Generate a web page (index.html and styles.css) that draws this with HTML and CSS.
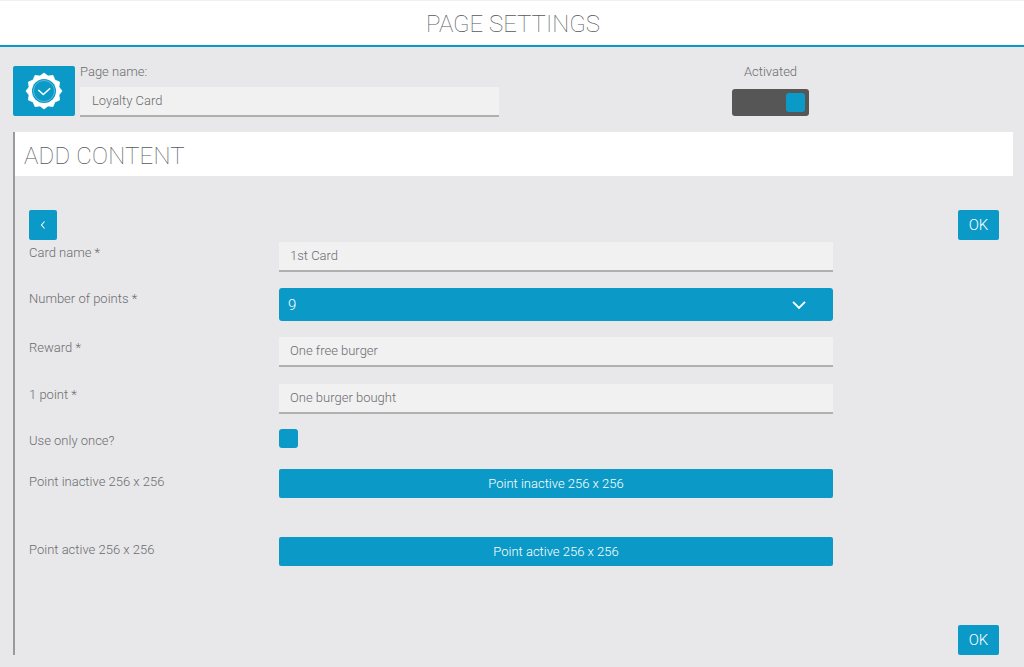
FILE: index.html
```html
<!DOCTYPE html>
<html lang="en">
<head>
<meta charset="utf-8">
<title>Page settings</title>
<link rel="stylesheet" href="styles.css">
</head>
<body>
<header class="top"><h1>PAGE SETTINGS</h1></header>
<section class="page-row">
  <div class="badge">
    <svg width="40" height="40" viewBox="-20 -20 40 40" aria-hidden="true">
      <polygon fill="#fff" stroke="#fff" stroke-width="0.8" stroke-linejoin="round" points="18,0 14.9,4 15.6,9 10.9,10.9 9,15.6 4,14.9 0,18 -4,14.9 -9,15.6 -10.9,10.9 -15.6,9 -14.9,4 -18,0 -14.9,-4 -15.6,-9 -10.9,-10.9 -9,-15.6 -4,-14.9 0,-18 4,-14.9 9,-15.6 10.9,-10.9 15.6,-9 14.9,-4"/>
      <circle r="12" fill="#0b9ac7"/>
      <circle r="10.5" fill="none" stroke="#5db9da" stroke-width="1"/>
      <path d="M-5.7 -1 L-0.7 3.6 L6.2 -2.8" fill="none" stroke="#fff" stroke-width="1.5"/>
    </svg>
  </div>
  <div class="name-field">
    <label class="name-label">Page name:</label>
    <div class="input name-input">Loyalty Card</div>
  </div>
  <div class="activated">
    <span class="activated-label">Activated</span>
    <div class="toggle"><span class="knob"></span></div>
  </div>
</section>
<main class="panel">
  <h2 class="panel-title">ADD CONTENT</h2>
  <div class="toolbar">
    <button class="btn back" type="button">
      <svg width="8" height="10" viewBox="0 0 8 10" aria-hidden="true"><path d="M5.5 1.5 L2.5 5 L5.5 8.5" fill="none" stroke="#fff" stroke-width="1.1"/></svg>
    </button>
    <button class="btn ok" type="button">OK</button>
  </div>
  <form class="form">
    <div class="row"><span class="label">Card name *</span><div class="input">1st Card</div></div>
    <div class="row"><span class="label">Number of points *</span>
      <div class="select"><span>9</span>
        <svg width="14" height="10" viewBox="0 0 14 10" aria-hidden="true"><path d="M1 1.8 L7 7.8 L13 1.8" fill="none" stroke="#fff" stroke-width="1.9"/></svg>
      </div>
    </div>
    <div class="row"><span class="label">Reward *</span><div class="input">One free burger</div></div>
    <div class="row row-point"><span class="label">1 point *</span><div class="input">One burger bought</div></div>
    <div class="row row-check"><span class="label">Use only once?</span><span class="check"></span></div>
    <div class="row row-inactive"><span class="label">Point inactive 256 x 256</span><button class="upload" type="button">Point inactive 256 x 256</button></div>
    <div class="row row-active"><span class="label">Point active 256 x 256</span><button class="upload" type="button">Point active 256 x 256</button></div>
  </form>
  <div class="footer"><button class="btn ok" type="button">OK</button></div>
</main>
</body>
</html>
```
FILE: styles.css
```css
* { box-sizing: border-box; }
html, body { margin: 0; height: 100%; }
body {
  width: 1024px;
  height: 667px;
  overflow: hidden;
  background: #e8e8ea;
  color: #6c6c70;
  font-family: Roboto, "Liberation Sans", sans-serif;
  font-weight: 300;
  font-size: 13px;
}
.top {
  height: 47px;
  background: #fff;
  border-top: 1px solid #f0f0f0;
  border-bottom: 2px solid #0b9ac7;
  display: flex;
  align-items: center;
  justify-content: center;
}
.top h1 {
  margin: 0;
  padding-top: 2px;
  padding-left: 2px;
  font-size: 24px;
  font-weight: 100;
  line-height: 44px;
  color: #58585c;
}
.page-row {
  display: flex;
  height: 85px;
  padding: 19px 0 0 13px;
}
.badge {
  width: 62px;
  height: 50px;
  background: #0b9ac7;
  border-radius: 2px;
  display: flex;
  align-items: center;
  justify-content: center;
}
.name-field { width: 419px; margin: 0 0 0 5px; }
.name-label { display: block; height: 21px; line-height: 12px; }
.input {
  flex: none;
  width: 554px;
  height: 30px;
  padding: 0 11px;
  background: #f1f1f1;
  border-bottom: 2px solid #b0b0b0;
  line-height: 28px;
}
.name-input { width: 419px; padding-left: 12px; }
.activated {
  width: 77px;
  margin-left: 233px;
  display: flex;
  flex-direction: column;
  align-items: center;
}
.activated-label { height: 23px; line-height: 12px; }
.toggle {
  width: 77px;
  height: 27px;
  border-radius: 3px;
  background: #565656;
  padding: 4px;
  display: flex;
  justify-content: flex-end;
}
.knob { width: 19px; height: 19px; border-radius: 3px; background: #0b9ac7; }
.panel {
  width: 1000px;
  height: 523px;
  margin-left: 13px;
  border-left: 2px solid #9a9a9c;
  display: flex;
  flex-direction: column;
}
.panel-title {
  margin: 0;
  height: 44px;
  padding-left: 9px;
  background: #fff;
  font-size: 24px;
  font-weight: 100;
  letter-spacing: 0.2px;
  line-height: 48px;
  color: #58585c;
}
.toolbar {
  display: flex;
  justify-content: space-between;
  padding: 34px 14px 0;
}
.btn {
  height: 30px;
  border: 0;
  border-radius: 2px;
  padding: 0;
  background: #0b9ac7;
  color: #fff;
  font: 300 15px Roboto, "Liberation Sans", sans-serif;
  display: flex;
  align-items: center;
  justify-content: center;
}
.back { width: 28px; }
.ok { width: 41px; }
.form {
  display: flex;
  flex-direction: column;
  gap: 16px;
  padding: 2px 0 0 14px;
}
.row { display: flex; }
.label { flex: none; width: 250px; line-height: 20px; padding-top: 1px; }
.select {
  flex: none;
  width: 554px;
  height: 33px;
  padding: 0 27px 0 9px;
  border-radius: 3px;
  background: #0b9ac7;
  color: #fff;
  font-size: 15px;
  display: flex;
  align-items: center;
  justify-content: space-between;
}
.row-point { margin-top: 1px; }
.row-check { margin-top: -1px; }
.row-check .label { padding-top: 2px; }
.check { width: 19px; height: 19px; border-radius: 3px; background: #0b9ac7; }
.row-inactive { margin-top: 2px; }
.row-active { margin-top: 23px; }
.row-inactive .label, .row-active .label { padding-top: 3px; }
.upload {
  flex: none;
  width: 554px;
  height: 29px;
  border: 0;
  border-radius: 2px;
  background: #0b9ac7;
  color: #fff;
  font: 300 13px Roboto, "Liberation Sans", sans-serif;
}
.footer {
  margin-top: auto;
  display: flex;
  justify-content: flex-end;
  padding-right: 14px;
}
```
